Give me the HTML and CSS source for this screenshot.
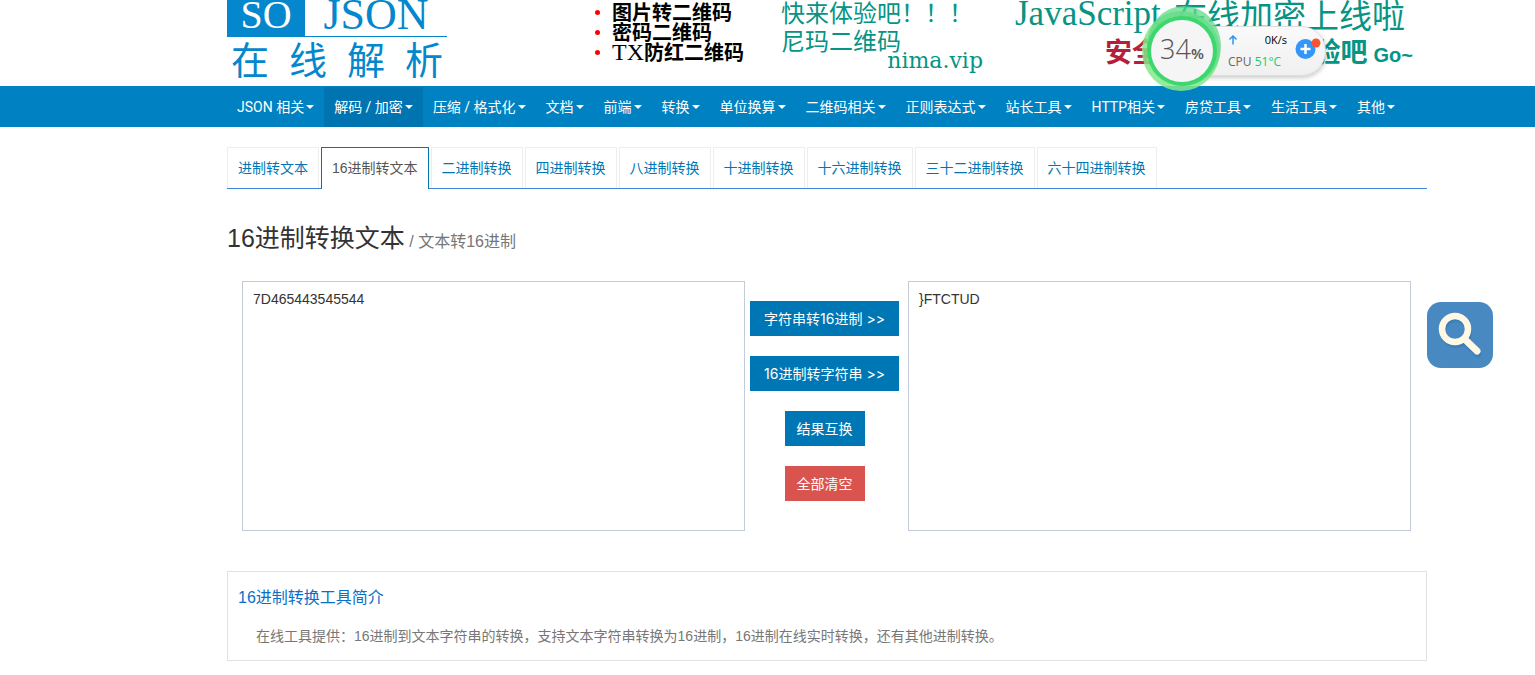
FILE: index.html
```html
<!DOCTYPE html>
<html lang="zh-CN">
<head>
<meta charset="utf-8">
<title>16进制转换文本</title>
<link rel="stylesheet" href="styles.css">
</head>
<body>
<header class="header">
  <div class="wrap header-row">
    <a class="logo" href="#">
      <span class="logo-top"><span class="logo-so">SO</span><span class="logo-json">JSON</span></span>
      <span class="logo-sub"><span>在</span><span>线</span><span>解</span><span>析</span></span>
    </a>
    <ul class="qr-list">
      <li>图片转二维码</li>
      <li>密码二维码</li>
      <li><span class="latin">TX</span>防红二维码</li>
    </ul>
    <div class="promo">
      <div>快来体验吧！！！</div>
      <div>尼玛二维码</div>
      <div class="promo-site">nima.vip</div>
    </div>
    <div class="crypt">
      <div class="crypt-title"><span class="crypt-latin">JavaScript</span> <span>在线加密上线啦</span></div>
      <div class="crypt-sub"><span class="red">安全</span><span class="crypt-go">验吧 <span class="go">Go~</span></span></div>
    </div>
  </div>
  <aside class="monitor">
    <div class="monitor-pill">
      <div class="monitor-net">
        <svg width="10" height="10" viewBox="0 0 10 10"><path d="M5 9.500V1.500M1.500 4.500L5 1l3.500 3.500" fill="none" stroke="#2f95f5" stroke-width="1.500"/></svg>
        <span>0K/s</span>
      </div>
      <div class="monitor-cpu">CPU <span>51°C</span></div>
    </div>
    <svg class="monitor-ring" width="82" height="86" viewBox="0 0 82 86">
      <ellipse cx="40" cy="45" rx="39" ry="40" fill="#86e88a" opacity=".85"/>
      <ellipse cx="43" cy="40" rx="37" ry="40" fill="#5fd988" opacity=".75"/>
      <circle cx="41" cy="45" r="35" fill="#2fd566" opacity=".8"/>
      <circle cx="41" cy="45" r="31" fill="#f5f5f5"/>
    </svg>
    <div class="monitor-load">34<small>%</small></div>
    <svg class="monitor-plus" width="27" height="25" viewBox="0 0 27 25">
      <circle cx="10.500" cy="14" r="10" fill="#3296fa"/>
      <path d="M10.500 9v10M5.500 14h10" stroke="#fff" stroke-width="2.500"/>
      <circle cx="21" cy="8" r="4.500" fill="#fb5430"/>
    </svg>
  </aside>
</header>

<nav class="nav">
  <div class="wrap nav-row">
    <a href="#">JSON 相关</a>
    <a class="active" href="#">解码 / 加密</a>
    <a href="#">压缩 / 格式化</a>
    <a href="#">文档</a>
    <a href="#">前端</a>
    <a href="#">转换</a>
    <a href="#">单位换算</a>
    <a href="#">二维码相关</a>
    <a href="#">正则表达式</a>
    <a href="#">站长工具</a>
    <a href="#">HTTP相关</a>
    <a href="#">房贷工具</a>
    <a href="#">生活工具</a>
    <a href="#">其他</a>
  </div>
</nav>

<main class="main">
  <div class="wrap">
    <div class="tabs">
      <a href="#">进制转文本</a>
      <a class="current" href="#">16进制转文本</a>
      <a href="#">二进制转换</a>
      <a href="#">四进制转换</a>
      <a href="#">八进制转换</a>
      <a href="#">十进制转换</a>
      <a href="#">十六进制转换</a>
      <a href="#">三十二进制转换</a>
      <a href="#">六十四进制转换</a>
    </div>
    <h1 class="title">16进制转换文本<small> / 文本转16进制</small></h1>
    <div class="converter">
      <textarea aria-label="输入" spellcheck="false">7D465443545544</textarea>
      <div class="actions">
        <button type="button" class="convert">字符串转16进制 &gt;&gt;</button>
        <button type="button" class="convert">16进制转字符串 &gt;&gt;</button>
        <button type="button">结果互换</button>
        <button type="button" class="danger">全部清空</button>
      </div>
      <textarea aria-label="输出" spellcheck="false">}FTCTUD</textarea>
    </div>
    <section class="intro">
      <h2>16进制转换工具简介</h2>
      <p>在线工具提供：16进制到文本字符串的转换，支持文本字符串转换为16进制，16进制在线实时转换，还有其他进制转换。</p>
    </section>
  </div>
</main>

<button type="button" class="search" aria-label="搜索">
  <svg width="66" height="66" viewBox="0 0 66 66">
    <rect width="66" height="66" rx="14" fill="#4889c2"/>
    <g fill="none" stroke="#2d6ca5" stroke-opacity=".35" transform="translate(1 3)">
      <circle cx="28" cy="27" r="13" stroke-width="6"/>
      <path d="M38 38L50 49" stroke-width="7" stroke-linecap="round"/>
    </g>
    <g fill="none" stroke="#fff8e4">
      <circle cx="28" cy="27" r="13" stroke-width="6.500"/>
      <path d="M38 37.500L50 49" stroke-width="7" stroke-linecap="round"/>
    </g>
  </svg>
</button>
</body>
</html>
```

FILE: styles.css
```css
* { box-sizing: border-box; }
body {
  margin: 0;
  background: #fff;
  color: #333;
  font: 14px/20px "Liberation Sans", "Noto Sans CJK SC", sans-serif;
}
a { text-decoration: none; }
.header, .nav, .main { padding-left: 119px; }
.wrap { max-width: 1200px; margin: 0 auto; }

.header { position: relative; }
.header-row { display: flex; height: 86px; }
.logo { width: 220px; color: #0487cd; }
.logo-top { display: flex; height: 37px; font: 40px/30px "Liberation Serif", serif; }
.logo-so { width: 78px; background: #0487cd; color: #fff; text-align: center; }
.logo-json { flex: 1; border-bottom: 1px solid #0487cd; font-size: 44px; text-align: center; }
.logo-sub { display: flex; justify-content: space-between; padding: 0 4px; font: 400 38px/42px "Noto Sans CJK SC", sans-serif; }

.qr-list {
  width: 187px;
  margin: 2px 0 0 147px;
  padding: 0 0 0 18px;
  color: #000;
  font: 700 20px/20px "Noto Sans CJK SC", sans-serif;
  list-style: none;
}
.qr-list li { display: flex; align-items: center; }
.qr-list li::before {
  content: "";
  width: 5px;
  height: 5px;
  margin: 0 12px 0 -17px;
  border-radius: 50%;
  background: #f00;
}
.latin { font: 24px/20px "Liberation Serif", serif; }
.promo { width: 234px; color: #069484; font: 400 24px/28px "Noto Sans CJK SC", sans-serif; }
.promo > :first-child { margin-top: -2px; }
.promo-site { width: 202px; font: 22px/14px "DejaVu Serif", serif; text-align: right; }
.crypt { width: 398px; color: #069484; }
.crypt-title { display: flex; justify-content: space-between; width: 390px; font: 400 33px/28px "Noto Sans CJK SC", sans-serif; white-space: nowrap; }
.crypt-latin { font: 35px/28px "Liberation Serif", serif; }
.crypt-sub { display: flex; justify-content: space-between; padding-left: 90px; font: 700 27px/46px "Noto Sans CJK SC", sans-serif; }
.red { color: #b51f3b; }
.go { font: bold 20px/46px "Liberation Sans", sans-serif; }

.monitor { position: absolute; top: 6px; right: 208px; width: 186px; height: 86px; }
.monitor-pill {
  position: absolute;
  top: 20px;
  right: 1px;
  width: 150px;
  height: 50px;
  padding: 3px 38px 0 51px;
  border: 1px solid #ddd;
  border-radius: 0 25px 25px 0;
  background: linear-gradient(#fafafa, #f0f0f0);
  box-shadow: 1px 2px 4px rgba(0, 0, 0, .2);
  font: 12px/20px "Open Sans", sans-serif;
  white-space: nowrap;
}
.monitor-net { display: flex; align-items: center; justify-content: space-between; color: #000; font-size: 11px; }
.monitor-cpu { color: #666; line-height: 24px; }
.monitor-cpu span { color: #16cf62; }
.monitor-ring { position: absolute; top: 0; left: 0; }
.monitor-load { position: absolute; top: 27px; left: 10px; width: 62px; color: #555; font: 300 27px/32px "Open Sans", sans-serif; text-align: center; }
.monitor-load small { font-size: 15px; font-weight: 600; }
.monitor-plus { position: absolute; top: 29px; left: 154px; }

.nav { background: #0081c2; }
.nav-row { display: flex; height: 41px; padding-top: 1px; }
.nav a {
  display: flex;
  align-items: center;
  padding: 0 10px;
  color: #fff;
  font: 14px/40px Roboto, "Noto Sans CJK SC", sans-serif;
  white-space: nowrap;
}
.nav a::after {
  content: "";
  margin-left: 2px;
  border: 4px solid transparent;
  border-top-color: #fff;
  border-bottom: 0;
}
.nav .active { background: #0074b0; }

.tabs { display: flex; gap: 2px; margin-top: 20px; border-bottom: 1px solid #3f87da; }
.tabs a { padding: 10px; border: 1px solid #eee; border-bottom: 0; color: #0077b5; white-space: nowrap; }
.tabs .current { margin-bottom: -1px; border-color: #0077b5; background: #fff; color: #555; }
.title { margin: 29px 0 23px; font-size: 25px; font-weight: 400; line-height: 40px; }
.title small { color: #777; font-size: 16px; line-height: 16px; }
.converter { display: flex; padding: 0 16px 0 15px; }
.converter textarea {
  flex: 1;
  min-width: 0;
  height: 250px;
  padding: 7px 10px;
  border: 1px solid #c3cad9;
  border-radius: 0;
  outline: 0;
  background: #fff;
  color: #333;
  font: 14px/20px "Liberation Sans", sans-serif;
  resize: none;
}
.actions { display: flex; flex-direction: column; align-items: center; width: 163px; gap: 20px; padding: 20px 9px 0 5px; }
.actions button {
  height: 35px;
  padding: 0 12px;
  border: 0;
  background: #0077b5;
  color: #fff;
  font: 14px/20px "Inter", "Noto Sans CJK SC", sans-serif;
  white-space: nowrap;
}
.actions .convert { width: 100%; }
.actions .danger { background: #d9534f; }
.intro { margin-top: 40px; padding: 16px 10px 12px; border: 1px solid #e2e2e2; }
.intro h2 { margin: 0; color: #0a6fc9; font-size: 16px; font-weight: 400; line-height: 20px; }
.intro p { margin: 16px 0 0; padding-left: 18px; color: #777; line-height: 24px; }
.search { position: fixed; top: 302px; right: 42px; padding: 0; border: 0; background: none; line-height: 0; }
```
